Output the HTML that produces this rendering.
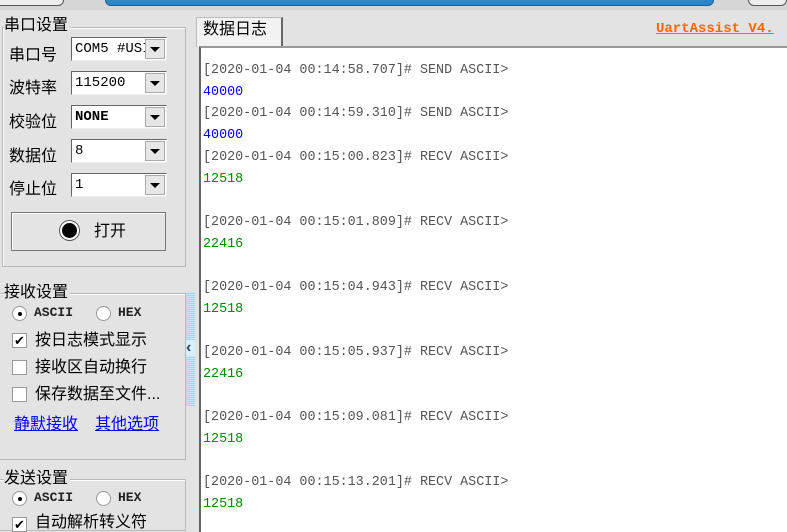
<!DOCTYPE html><html><head><meta charset="utf-8"><style>
html,body{margin:0;width:787px;height:532px;overflow:hidden}
body{background:#e3e3e3;position:relative;font-family:"Liberation Sans","Noto Sans CJK SC",sans-serif;font-size:15px;color:#000}
.a{position:absolute}
.gb{position:absolute;border:1px solid #b8b8b8;box-shadow:1px 1px 0 #fff inset}
.gt{position:absolute;background:#e3e3e3;font-size:16px;line-height:18px;padding-right:2px}
.lbl{position:absolute;font-size:16px;line-height:18px}
.cb{position:absolute;left:71px;width:96px;height:24px;background:#fff;border:1px solid #666;border-right-color:#eee;border-bottom-color:#eee;box-sizing:border-box;font-family:"Liberation Mono",monospace;font-size:14px;line-height:22px;padding-left:3px}
.cb i{position:absolute;right:1px;top:1px;width:20px;height:20px;background:#e6e6e6;border:1px solid #aaa;box-sizing:border-box}
.cb i:after{content:"";position:absolute;left:4px;top:7px;border:5px solid transparent;border-top:5px solid #000;border-bottom:0}
.rad{position:absolute;width:13px;height:13px;border-radius:50%;border:1px solid #999;background:#fff}
.chk{position:absolute;width:13px;height:13px;border:1px solid #999;background:#fff;font-size:13px;line-height:13px;text-align:center}
.mono{font-family:"Liberation Mono",monospace;font-size:13px}
.log{position:absolute;left:199px;top:46px;width:586px;height:484px;background:#fff;border-left:2px solid #666;border-top:2px solid #999}
.l{position:absolute;left:2px;font-family:"Liberation Mono",monospace;font-size:13.4px;line-height:16px;color:#555;white-space:pre}
.b{color:#00f}.g{color:#080}
</style></head><body>
<div class="a" style="left:0;top:0;width:787px;height:10px;background:#d6d6d6"></div>
<div class="a" style="left:105px;top:-4px;width:607px;height:8px;background:#2b86c9;border-radius:0 0 6px 6px;border:1px solid #1a5d91"></div>
<div class="a" style="left:-10px;top:-6px;width:72px;height:10px;border:1px solid #555;border-radius:6px;background:#eee"></div>
<div class="a" style="left:748px;top:-6px;width:37px;height:10px;border:1px solid #555;border-radius:6px;background:#eee"></div>

<div class="gb" style="left:2px;top:27px;width:182px;height:238px"></div>
<div class="gt" style="left:4px;top:17px">串口设置</div>
<div class="lbl" style="left:9px;top:47px">串口号</div>
<div class="cb" style="top:37px">COM5 #USI<i></i></div>
<div class="lbl" style="left:9px;top:80px">波特率</div>
<div class="cb" style="top:71px">115200<i></i></div>
<div class="lbl" style="left:9px;top:114px">校验位</div>
<div class="cb" style="top:105px;font-weight:bold">NONE<i></i></div>
<div class="lbl" style="left:9px;top:148px">数据位</div>
<div class="cb" style="top:139px">8<i></i></div>
<div class="lbl" style="left:9px;top:181px">停止位</div>
<div class="cb" style="top:173px">1<i></i></div>
<div class="a" style="left:11px;top:212px;width:155px;height:39px;border:1px solid #777;background:#e4e4e4;box-sizing:border-box;box-shadow:1px 1px 0 #fff inset"></div>
<div class="a" style="left:62px;top:223px;width:15px;height:15px;border-radius:50%;background:#000;box-shadow:0 0 0 2px #fff,0 0 0 3px #555"></div>
<div class="lbl" style="left:94px;top:223px">打开</div>

<div class="gb" style="left:-2px;top:293px;width:186px;height:165px"></div>
<div class="gt" style="left:4px;top:284px">接收设置</div>
<div class="rad" style="left:12px;top:306px"><div style="width:4px;height:4px;background:#000;border-radius:50%;margin:4.5px"></div></div>
<div class="a mono" style="left:34px;top:305px;font-weight:bold;color:#222">ASCII</div>
<div class="rad" style="left:96px;top:306px"></div>
<div class="a mono" style="left:118px;top:305px;font-weight:bold;color:#222">HEX</div>
<div class="chk" style="left:12px;top:333px">✔</div><div class="lbl" style="left:35px;top:332px">按日志模式显示</div>
<div class="chk" style="left:12px;top:360px"></div><div class="lbl" style="left:35px;top:359px">接收区自动换行</div>
<div class="chk" style="left:12px;top:387px"></div><div class="lbl" style="left:35px;top:386px">保存数据至文件...</div>
<div class="lbl" style="left:14px;top:416px;color:#00f;text-decoration:underline">静默接收</div>
<div class="lbl" style="left:95px;top:416px;color:#00f;text-decoration:underline">其他选项</div>

<div class="gb" style="left:-2px;top:479px;width:186px;height:50px"></div>
<div class="gt" style="left:4px;top:470px">发送设置</div>
<div class="rad" style="left:12px;top:491px"><div style="width:4px;height:4px;background:#000;border-radius:50%;margin:4.5px"></div></div>
<div class="a mono" style="left:34px;top:490px;font-weight:bold;color:#222">ASCII</div>
<div class="rad" style="left:96px;top:491px"></div>
<div class="a mono" style="left:118px;top:490px;font-weight:bold;color:#222">HEX</div>
<div class="chk" style="left:12px;top:517px">✔</div><div class="lbl" style="left:35px;top:514px">自动解析转义符</div>

<div class="a" style="left:186px;top:292px;width:9px;height:114px;background:repeating-linear-gradient(0deg,#a8d4ea 0 1px,#cbe6f3 1px 2px)"></div>
<div class="a" style="left:186px;top:340px;width:9px;height:16px;background:#d8eef8;font-size:16px;font-weight:bold;color:#246;line-height:16px">‹</div>

<div class="a" style="left:196px;top:17px;width:84px;height:29px;background:#f2f2f2;border:1px solid #bbb;border-bottom:none;border-right:2px solid #666"></div>
<div class="lbl" style="left:203px;top:21px">数据日志</div>
<div class="a" style="left:656px;top:21px;color:#f60;font-family:'Liberation Mono',monospace;font-weight:bold;font-size:14px;text-decoration:underline;white-space:nowrap">UartAssist V4.</div>

<div class="log">
<div class="l" style="top:15px">[2020-01-04 00:14:58.707]# SEND ASCII&gt;</div>
<div class="l b" style="top:37px">40000</div>
<div class="l" style="top:58px">[2020-01-04 00:14:59.310]# SEND ASCII&gt;</div>
<div class="l b" style="top:80px">40000</div>
<div class="l" style="top:102px">[2020-01-04 00:15:00.823]# RECV ASCII&gt;</div>
<div class="l g" style="top:124px">12518</div>
<div class="l" style="top:167px">[2020-01-04 00:15:01.809]# RECV ASCII&gt;</div>
<div class="l g" style="top:189px">22416</div>
<div class="l" style="top:232px">[2020-01-04 00:15:04.943]# RECV ASCII&gt;</div>
<div class="l g" style="top:254px">12518</div>
<div class="l" style="top:297px">[2020-01-04 00:15:05.937]# RECV ASCII&gt;</div>
<div class="l g" style="top:319px">22416</div>
<div class="l" style="top:362px">[2020-01-04 00:15:09.081]# RECV ASCII&gt;</div>
<div class="l g" style="top:384px">12518</div>
<div class="l" style="top:427px">[2020-01-04 00:15:13.201]# RECV ASCII&gt;</div>
<div class="l g" style="top:449px">12518</div>
</div>
</body></html>
